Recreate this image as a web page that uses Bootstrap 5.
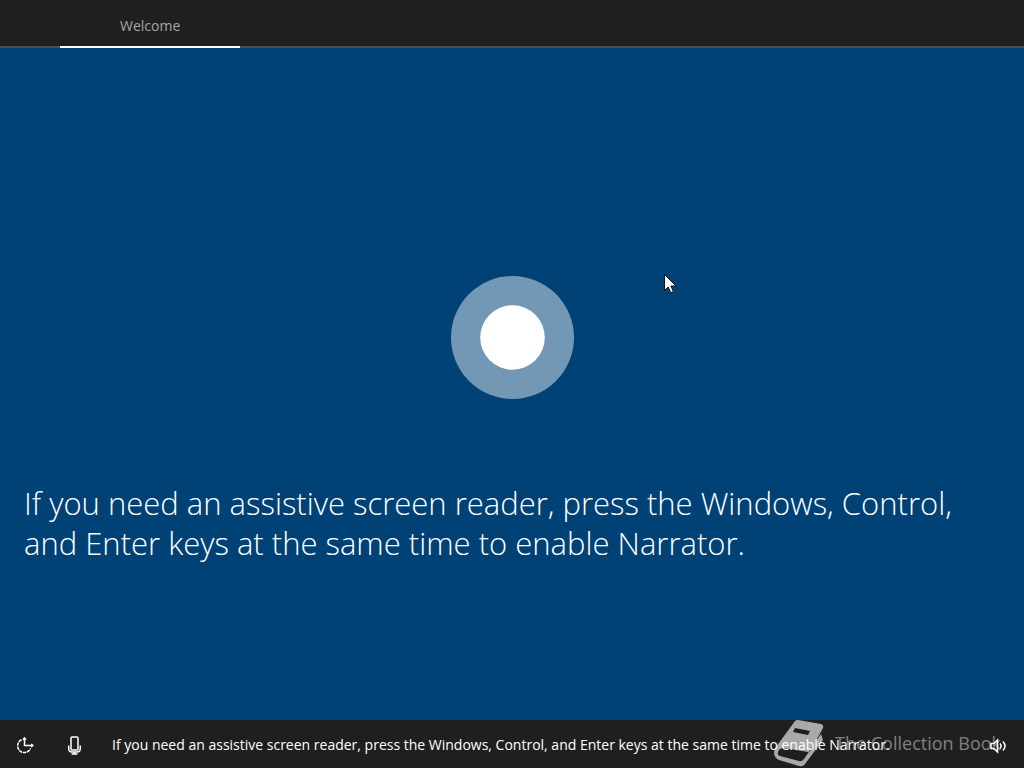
<!DOCTYPE html>
<html lang="en" class="h-100">
<head>
<meta charset="utf-8">
<meta name="viewport" content="width=device-width, initial-scale=1">
<title>Welcome</title>
<link href="https://cdn.jsdelivr.net/npm/bootstrap@5.3.0/dist/css/bootstrap.min.css" rel="stylesheet">
<style>
body { background: #004275; font-family: "Open Sans", "Noto Sans", sans-serif; }
.setup-tabs { background: #1f1f1f; border-bottom: 2px solid #4d4d4d; padding: 0 60px; min-height: 48px; }
.setup-tabs .nav-link { color: #a6a6a6; font-size: 14px; line-height: 20px; padding: 16px 60px 10px; margin-bottom: -2px; border-bottom: 2px solid #fff; }
.orb-area { padding-top: 228px; }
.orb { width: 123px; height: 123px; }
.prompt { font-weight: 300; font-size: 31px; line-height: 40px; margin: 84px 24px 0; }
.setup-bar { background: #1f1f1f; min-height: 48px; padding-top: 3px; }
.tool { width: 50px; height: 44px; }
.caption { font-size: 14px; line-height: 20px; margin-left: 12px; padding-bottom: 2px; }
.watermark { right: 23px; bottom: 0; color: #808080; font-size: 18px; line-height: 24px; gap: 10px; }
.watermark span { padding-bottom: 3px; }
.pointer { left: 664px; top: 274px; }
</style>
</head>
<body class="d-flex flex-column min-vh-100 text-white position-relative">
<header class="setup-tabs">
  <ul class="nav">
    <li class="nav-item"><a class="nav-link" href="#welcome" aria-current="page">Welcome</a></li>
  </ul>
</header>
<main id="welcome" class="flex-grow-1">
  <div class="orb-area d-flex justify-content-center">
    <svg class="orb" viewBox="0 0 123 123" aria-hidden="true"><circle cx="61.5" cy="61.5" r="61.5" fill="#7398b5"/><circle cx="61.5" cy="61.5" r="32.3" fill="#fff"/></svg>
  </div>
  <h1 class="prompt">If you need an assistive screen reader, press the Windows, Control, and Enter keys at the same time to enable Narrator.</h1>
</main>
<footer class="setup-bar d-flex align-items-center position-relative">
  <div class="watermark position-absolute d-flex align-items-center" aria-hidden="true">
    <svg width="52" height="48" viewBox="0 0 52 48"><path fill="#a9a9a9" fill-rule="evenodd" d="M22 1Q23 0 25 0L48 4Q51 5 50 8L38 30Q37 32 35 32L11 28Q6 28 5 32Q4 35 7 36L26 41Q29 42 31 39L48 14L50 20L32 44Q30 47 26 46L6 40Q1 38 1 32L3 27ZM22 8L20 12L35 15L37 11Z"/></svg>
    <span>The Collection Book</span>
  </div>
  <button type="button" class="tool btn border-0 p-0 text-white d-flex align-items-center justify-content-center" aria-label="Ease of Access">
    <svg width="20" height="20" viewBox="0 0 20 20" fill="none" stroke="currentColor" stroke-width="1.5"><path d="M9.5 2V9.5H17M8 3.7L9.5 2L11 3.7M16.2 8L17.8 9.5L16.2 11"/><path d="M6.5 3.8A6.7 6.7 0 1 0 15.5 12.5" stroke-dasharray="3.4 .7"/></svg>
  </button>
  <button type="button" class="tool btn border-0 p-0 text-white d-flex align-items-center justify-content-center" aria-label="Microphone">
    <svg width="20" height="20" viewBox="0 0 20 20" fill="none" stroke="currentColor" stroke-width="1.5"><rect x="6" y="1" width="7" height="13" rx="1"/><path d="M3.7 9.5V12.5Q3.7 16 7 16H12Q15.3 16 15.3 12.5V9.5M9.5 16V18M6.5 18H12.5"/></svg>
  </button>
  <p class="caption mb-0 position-relative">If you need an assistive screen reader, press the Windows, Control, and Enter keys at the same time to enable Narrator.</p>
  <button type="button" class="tool btn border-0 p-0 text-white d-flex align-items-center justify-content-center ms-auto position-relative" aria-label="Volume">
    <svg width="18" height="18" viewBox="0 0 18 18" fill="none" stroke="currentColor" stroke-width="1.5"><path d="M1 6.5H4L7.5 3V15L4 11.5H1ZM10 6.5Q12.3 9 10 11.5M13 4.5Q17 9 13 13.5"/></svg>
  </button>
</footer>
<svg class="pointer position-absolute" width="13" height="20" viewBox="0 0 13 20" aria-hidden="true"><path d="M.5 .5V16.5L4.2 13L6.8 18.8L9.4 17.6L6.9 12H12Z" fill="#fff" stroke="#111" stroke-width="1"/></svg>
<script src="https://cdn.jsdelivr.net/npm/bootstrap@5.3.0/dist/js/bootstrap.bundle.min.js"></script>
</body>
</html>
